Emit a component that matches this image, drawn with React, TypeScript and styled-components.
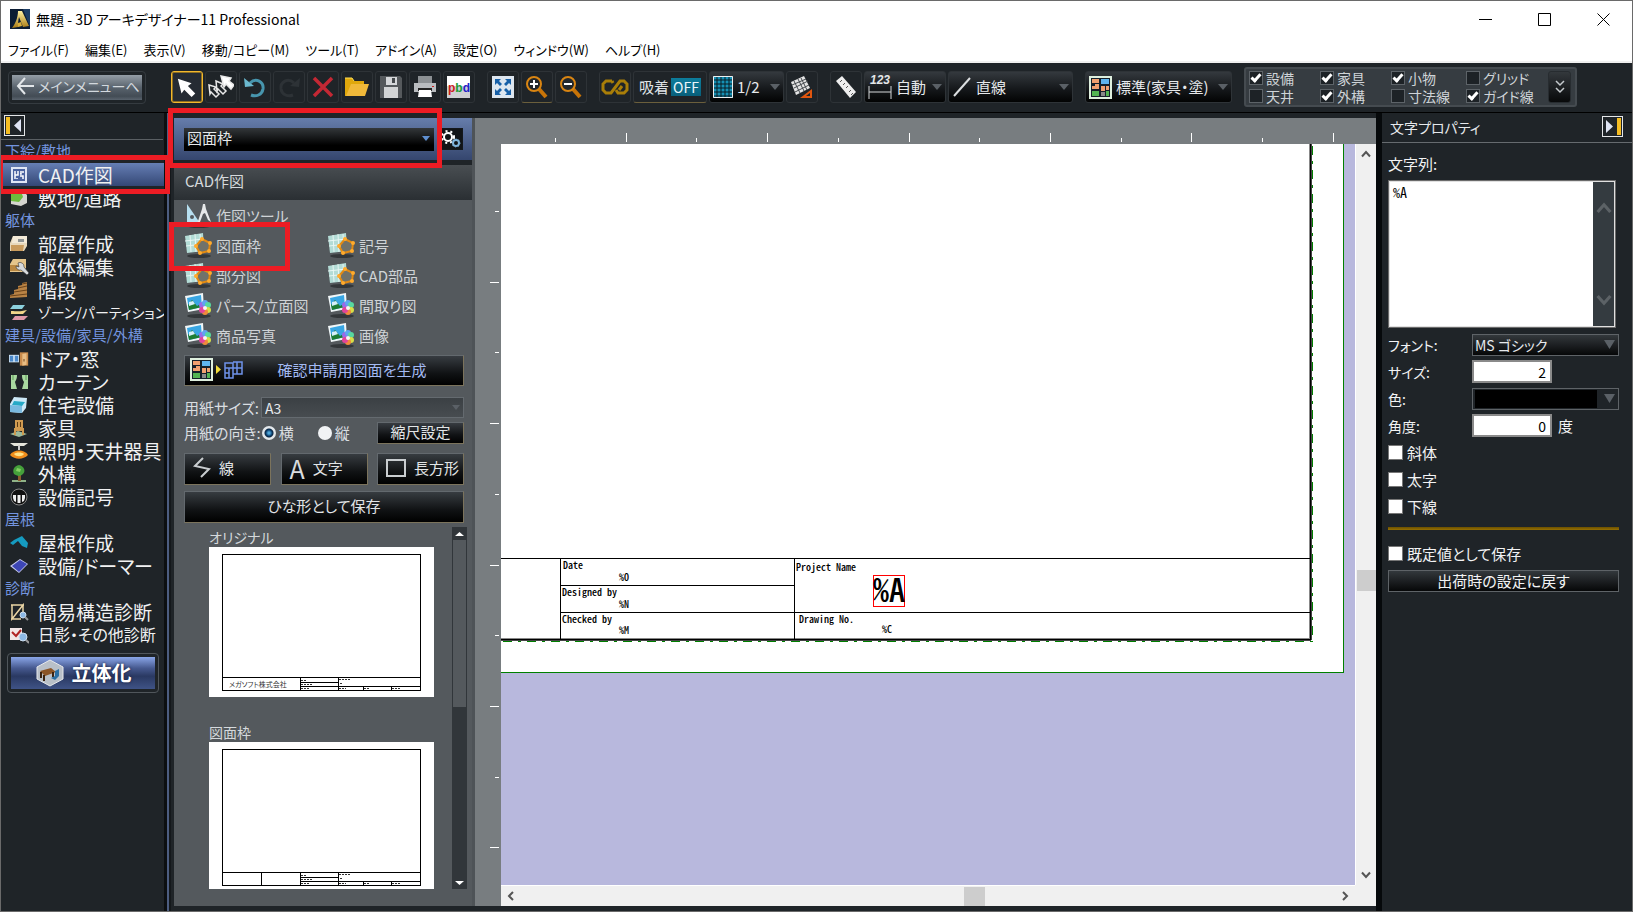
import React from "react";
import styled, { createGlobalStyle, css } from "styled-components";

const GlobalStyle = createGlobalStyle`
  *, *::before, *::after { box-sizing: border-box; }
  html, body { margin: 0; padding: 0; }
  body, button, input, select, textarea {
    font-family: "Noto Sans CJK JP", "Noto Sans", sans-serif;
    font-feature-settings: "palt";
    font-size: 15px;
    line-height: 20px;
  }
  button, input, select, textarea { margin: 0; padding: 0; border-radius: 0; outline: none; }
  button { cursor: default; white-space: nowrap; }
  svg { display: block; flex: none; }
`;

/* ---------- window frame ---------- */

const Window = styled.div`
  position: relative;
  display: flex;
  flex-direction: column;
  height: 100vh;
  overflow: hidden;
  border: 1px solid #6a6a6a;
  background: #1f2428;
  color: #e6e9ec;
  white-space: nowrap;
`;

const TitleBar = styled.header`
  display: flex;
  align-items: center;
  flex: none;
  height: 36px;
  padding: 0 2px 0 9px;
  gap: 6px;
  background: #fff;
  color: #000;
`;

const Title = styled.h1`
  flex: 1;
  margin: 0;
  font-size: 14px;
  line-height: 20px;
  font-weight: 400;
`;

const CaptionButton = styled.button`
  display: flex;
  align-items: center;
  justify-content: center;
  width: 53px;
  height: 34px;
  border: 0;
  background: transparent;
`;

const MenuBar = styled.nav`
  display: flex;
  flex: none;
  height: 26px;
  padding: 1px 0 0 7px;
  gap: 16px;
  background: #fff;
  border-bottom: 2px solid #f0f0f0;
`;

const MenuItem = styled.button`
  border: 0;
  background: transparent;
  color: #000;
  font-size: 13px;
`;

/* ---------- toolbar ---------- */

const Toolbar = styled.div`
  display: flex;
  align-items: center;
  flex: none;
  height: 50px;
  padding: 0 0 1px 7px;
  gap: 12px;
  border-bottom: 1px solid #000;
`;

const ToolGroup = styled.div`
  display: flex;
  gap: 2px;
`;

const MainMenuFrame = styled.div`
  flex: none;
  width: 138px;
  height: 33px;
  margin-right: 13px;
  padding: 3px;
  border: 1px solid #353b40;
  border-radius: 4px;
`;

const MainMenuButton = styled.button`
  display: flex;
  align-items: center;
  gap: 4px;
  width: 100%;
  height: 25px;
  padding: 0 0 2px 4px;
  border: 0;
  background: linear-gradient(#949da6, #59636d 50%, #434c55 85%, #59636d);
  color: #d3d9de;
  font-size: 14px;
`;

const ToolButton = styled.button<{ $active?: boolean; $underlined?: boolean; $width?: number }>`
  display: flex;
  flex: none;
  align-items: center;
  justify-content: center;
  gap: 2px;
  width: ${(p) => p.$width ?? 32}px;
  height: 32px;
  border: 1px solid #2e3337;
  border-radius: 3px;
  background: #1f2428;
  color: #dfe3e6;
  ${(p) => p.$underlined && css`border-bottom-color: #6b5f3c;`}
  ${(p) => p.$active && css`border: 1px solid #f2b82c; box-shadow: inset 0 0 0 1px #8f6f22; background: #252b33;`}
`;

const SnapState = styled.span`
  width: 30px;
  height: 18px;
  background: linear-gradient(#0d7d9c, #085f7a);
  color: #e9f6fa;
  font-size: 14px;
  line-height: 18px;
`;

const ToolSelect = styled.label<{ $width: number }>`
  display: flex;
  flex: none;
  align-items: center;
  gap: 4px;
  width: ${(p) => p.$width}px;
  height: 32px;
  padding: 0 3px;
  border: 1px solid #2e3337;
  border-radius: 3px;
  background: linear-gradient(#34393e, #16191c 55%, #020303);
`;

const PlainSelect = styled.select`
  flex: 1;
  min-width: 0;
  height: 20px;
  border: 0;
  appearance: none;
  background: transparent;
  color: #e6e9ec;
`;

const LayerPanel = styled.div`
  display: flex;
  flex: none;
  align-items: center;
  width: 333px;
  height: 40px;
  padding: 0 4px 0 3px;
  border: 2px solid #454b50;
  border-radius: 3px;
  background: #363c41;
`;

const LayerGrid = styled.div`
  display: grid;
  flex: 1;
  grid-template-columns: 71px 71px 75px 1fr;
  grid-auto-rows: 18px;
  align-items: center;
`;

const LayerLabel = styled.label`
  display: flex;
  align-items: center;
  gap: 3px;
  color: #cfd4d8;
  font-size: 14px;
  line-height: 18px;
`;

const DarkCheck = styled.input.attrs({ type: "checkbox" })`
  appearance: none;
  display: grid;
  place-items: center;
  flex: none;
  width: 14px;
  height: 14px;
  border: 1px solid #5d6368;
  background: #1d2226;
  &:checked::after {
    content: "";
    width: 6px;
    height: 10px;
    margin-bottom: 3px;
    border: solid #fff;
    border-width: 0 3px 3px 0;
    transform: rotate(42deg);
  }
`;

const ExpandButton = styled.button`
  display: grid;
  place-items: center;
  width: 23px;
  height: 32px;
  border: 1px solid #272c30;
  border-radius: 3px;
  background: linear-gradient(#33383c, #08090a);
`;

/* ---------- body ---------- */

const Body = styled.main`
  display: flex;
  flex: 1;
  min-height: 0;
`;

const Sidebar = styled.nav`
  flex: none;
  width: 163px;
`;

const ToggleRow = styled.div`
  display: flex;
  align-items: center;
  height: 27px;
  padding: 0 0 1px 3px;
  margin-right: 1px;
  border-bottom: 1px solid #5a5f63;
`;

const ToggleButton = styled.button`
  display: grid;
  place-items: center;
  width: 21px;
  height: 21px;
  border: 1px solid #e4e6e8;
  background: #1f2428;
`;

const SideGroup = styled.h2`
  height: 23px;
  margin: 0;
  padding-left: 4px;
  color: #7394df;
  font-size: 15px;
  font-weight: 400;
  line-height: 22px;
`;

/* Long names step down in size so that they stay inside the column. */
const nameSize = (length: number) => (length > 9 ? 14 : length > 7 ? 16 : 19);

const SideItem = styled.button<{ $active?: boolean; $length: number }>`
  display: flex;
  align-items: center;
  gap: 9px;
  width: 100%;
  height: 23px;
  padding-left: 8px;
  border: 0;
  background: ${(p) => (p.$active ? "linear-gradient(#667fb5, #344775)" : "transparent")};
  color: #f0f1f2;
  font-size: ${(p) => nameSize(p.$length)}px;
  line-height: 23px;
`;

const SolidFrame = styled.div`
  width: 152px;
  height: 40px;
  margin: 7px 0 0 6px;
  padding: 3px;
  border: 1px solid #50565b;
  border-radius: 4px;
`;

const SolidButton = styled.button`
  display: flex;
  align-items: center;
  justify-content: center;
  gap: 7px;
  width: 100%;
  height: 32px;
  border: 0;
  background: linear-gradient(#8aa6e8, #46598f 35%, #2a3962 60%, #3f5386);
  color: #fff;
  font-size: 20px;
  font-weight: 700;
  text-shadow: 0 0 3px #101a38;
`;

const Divider = styled.div`
  flex: none;
  width: 10px;
  background: linear-gradient(90deg, #0c0f11 0 3px, #4c5d80 3px 5px, #14181b 5px 7px, #1f2428 7px);
`;

/* ---------- tool panel ---------- */

const Panel = styled.section`
  display: flex;
  flex: none;
  flex-direction: column;
  width: 301px;
  margin: 5px 0;
  border-right: 3px solid #4e5357;
  background: #54595d;
`;

const PanelTop = styled.div`
  display: flex;
  align-items: center;
  justify-content: space-between;
  flex: none;
  height: 42px;
  padding: 0 9px 0 10px;
  background: linear-gradient(#667dab, #35466e);
`;

const FrameSelect = styled.label`
  display: flex;
  align-items: center;
  width: 250px;
  height: 23px;
  padding: 0 4px 2px 3px;
  background: linear-gradient(#33373a, #000 75%);
`;

const GearButton = styled.button`
  display: grid;
  place-items: center;
  width: 24px;
  height: 22px;
  border: 1px solid #14181c;
  background: #111417;
`;

const PanelTitle = styled.h2`
  flex: none;
  height: 40px;
  margin: 0;
  padding-left: 11px;
  border-top: 5px solid #1f2428;
  background: linear-gradient(#494e52, #2a2f33);
  color: #d5d9dc;
  font-size: 15px;
  font-weight: 400;
  line-height: 32px;
`;

const ToolGrid = styled.div`
  display: grid;
  flex: none;
  grid-template-columns: 143px 1fr;
  grid-auto-rows: 30px;
  padding: 1px 0 4px 11px;
`;

const GridItem = styled.button<{ $wide?: boolean }>`
  display: flex;
  align-items: center;
  gap: 4px;
  border: 0;
  background: transparent;
  color: #cfd3d6;
  ${(p) => p.$wide && css`grid-column: 1 / -1;`}
`;

const PanelForm = styled.div`
  display: flex;
  flex: none;
  flex-direction: column;
  padding: 0 8px 0 10px;
`;

const FormLine = styled.div<{ $top: number }>`
  display: flex;
  align-items: center;
  justify-content: space-between;
  margin-top: ${(p) => p.$top}px;
  color: #dadee1;
`;

const DarkButton = styled.button<{ $width?: number; $height: number; $blue?: boolean; $start?: boolean }>`
  display: flex;
  align-items: center;
  justify-content: ${(p) => (p.$start ? "flex-start" : "center")};
  gap: 8px;
  width: ${(p) => (p.$width ? `${p.$width}px` : "100%")};
  height: ${(p) => p.$height}px;
  padding: ${(p) => (p.$start ? "0 0 2px 8px" : "0 0 2px")};
  border: 1px solid #63696e;
  border-right-color: #7b735c;
  border-bottom-color: #7b735c;
  background: linear-gradient(#373c41, #101214 60%, #000);
  color: ${(p) => (p.$blue ? "#a3baf3" : "#e2e5e7")};
`;

const ButtonCaption = styled.span`
  flex: 1;
  padding-right: 10px;
  text-align: center;
`;

const IconPair = styled.span`
  display: flex;
  align-items: center;
  gap: 3px;
  padding-left: 5px;
`;

const LetterIcon = styled.span`
  color: #d9dcde;
  font-size: 25px;
  line-height: 28px;
`;

const PaperSelect = styled.div`
  display: flex;
  align-items: center;
  width: 203px;
  height: 21px;
  padding: 0 3px;
  border: 1px solid #646a6f;
  background: linear-gradient(#3b4044, #474c50);
`;

const SmallSelect = styled(PlainSelect)`
  font-size: 14px;
`;

const RadioSet = styled.div`
  display: flex;
  flex: 1;
  gap: 24px;
  padding-left: 1px;
`;

const RadioLabel = styled.label`
  display: flex;
  align-items: center;
  gap: 3px;
`;

const Radio = styled.input.attrs({ type: "radio" })`
  appearance: none;
  width: 14px;
  height: 14px;
  border-radius: 50%;
  background: #f1f3f5;
  &:checked {
    background: radial-gradient(circle at 50% 50%, #4fa6d8 0 1px, #0d4272 3px, #0a2540 4px, #e3e8ec 5px);
  }
`;

const TemplateArea = styled.div`
  display: flex;
  flex: 1;
  min-height: 0;
  justify-content: space-between;
  margin: 4px 5px 17px 35px;
`;

const TemplateList = styled.div`
  overflow: hidden;
`;

const Template = styled.button`
  display: flex;
  flex-direction: column;
  justify-content: flex-start;
  align-items: flex-start;
  height: 195px;
  border: 0;
  background: transparent;
  color: #d5d9dc;
  font-size: 14px;
  svg { background: #fff; }
  span { height: 20px; }
`;

const DarkScroll = styled.div`
  display: flex;
  flex-direction: column;
  width: 15px;
  padding: 0 1px;
  background: #31363a;
`;

const DarkScrollButton = styled.button`
  display: grid;
  place-items: center;
  width: 13px;
  height: 13px;
  border: 0;
  background: transparent;
`;

const DarkScrollThumb = styled.div`
  height: 167px;
  margin-bottom: auto;
  background: #54595d;
`;

/* ---------- drawing area ---------- */

const Workspace = styled.section`
  display: grid;
  flex: 1;
  min-width: 0;
  grid-template: 26px minmax(0, 1fr) 21px / 26px minmax(0, 1fr) 21px;
  margin: 5px 0;
  background: #787d80;
`;

const RulerTop = styled.div`
  grid-column: 2 / 4;
  overflow: hidden;
`;

const RulerLeft = styled.div`
  grid-column: 1;
  overflow: hidden;
`;

const Canvas = styled.div`
  overflow: hidden;
  background: #b8b8dd;
`;

const ScrollBar = styled.div<{ $horizontal?: boolean }>`
  display: flex;
  flex-direction: ${(p) => (p.$horizontal ? "row" : "column")};
  align-items: center;
  background: #f0f0f0;
  ${(p) =>
    p.$horizontal
      ? css`grid-column: 2; border-top: 1px solid #fff;`
      : css`border-left: 1px solid #fff;`}
`;

const ScrollButton = styled.button`
  display: grid;
  place-items: center;
  width: 20px;
  height: 20px;
  border: 0;
  background: transparent;
`;

const ScrollTrack = styled.div<{ $grow: number }>`
  flex: ${(p) => p.$grow} 0 0;
`;

const ScrollThumb = styled.div<{ $horizontal?: boolean }>`
  width: ${(p) => (p.$horizontal ? 21 : 19)}px;
  height: ${(p) => (p.$horizontal ? 19 : 21)}px;
  background: #cdcdcd;
`;

const ScrollCorner = styled.div`
  background: #f0f0f0;
`;

/* ---------- property panel ---------- */

const Properties = styled.aside`
  flex: none;
  width: 256px;
  border-left: 6px solid #06090b;
`;

const PropertiesHeader = styled.div`
  display: flex;
  align-items: center;
  justify-content: space-between;
  height: 30px;
  padding: 0 9px 2px 8px;
  border-bottom: 1px solid #666b6f;
`;

const PropertiesTitle = styled.h2`
  margin: 0;
  font-size: 14px;
  font-weight: 400;
`;

const PropertiesForm = styled.form`
  padding: 11px 13px 0 6px;
  color: #f2f3f4;
`;

const TextLabel = styled.label`
  display: block;
  height: 26px;
`;

const TextFrame = styled.div`
  display: flex;
  width: 228px;
  height: 148px;
  margin-bottom: 3px;
  border: 1px solid #6b6b6b;
  outline: 1px solid #e0e0e0;
  outline-offset: -2px;
  padding: 1px;
`;

const TextArea = styled.textarea`
  flex: 1;
  min-width: 0;
  padding: 0 3px;
  border: 0;
  resize: none;
  background: #fff;
  color: #000;
  font-size: 14px;
  font-feature-settings: "hwid";
`;

const TextScroll = styled.div`
  display: flex;
  flex-direction: column;
  justify-content: space-between;
  align-items: center;
  width: 21px;
  padding: 18px 0;
  background: #343b40;
`;

const PropRow = styled.div`
  display: flex;
  align-items: center;
  height: 27px;
`;

const PropLabel = styled.label`
  width: 84px;
  font-size: 14px;
`;

const PropSelect = styled.div`
  display: flex;
  align-items: center;
  flex: 1;
  height: 22px;
  padding: 0 3px 0 2px;
  border: 1px solid #5e6367;
  background: linear-gradient(#33383c, #060708);
`;

const ColorSelect = styled(PropSelect)`
  background: #1f2428;
`;

const ColorValue = styled.select`
  flex: 1;
  height: 18px;
  margin-right: 7px;
  border: 0;
  appearance: none;
  background: #000;
  color: #000;
`;

const NumberInput = styled.input.attrs({ type: "text" })`
  width: 80px;
  height: 23px;
  margin-right: 6px;
  padding-right: 4px;
  border: 2px solid #8a8a8a;
  background: #fff;
  color: #000;
  font-size: 14px;
  text-align: right;
`;

const CheckRow = styled.label`
  display: flex;
  align-items: center;
  gap: 4px;
  height: 27px;
`;

const WhiteCheck = styled.input.attrs({ type: "checkbox" })`
  appearance: none;
  width: 15px;
  height: 15px;
  border: 1px solid #777;
  background: #fff;
`;

const GoldRule = styled.hr`
  height: 3px;
  margin: 7px 0 10px;
  border: 0;
  background: linear-gradient(#6b5000, #967003);
`;

const ResetButton = styled.button`
  width: 100%;
  height: 22px;
  margin-top: 3px;
  border: 1px solid #5e6367;
  background: linear-gradient(#33383c, #060708);
  color: #f2f3f4;
  line-height: 18px;
`;

/* Red frames that mark the steps of the walkthrough, over the window. */
const Callout = styled.div<{ $left: number; $top: number; $width: number; $height: number }>`
  position: absolute;
  left: ${(p) => p.$left}px;
  top: ${(p) => p.$top}px;
  width: ${(p) => p.$width}px;
  height: ${(p) => p.$height}px;
  border: 5px solid #ed1c24;
  pointer-events: none;
`;

/* ---------- icons ---------- */

const Down = ({ color = "#5a6066", w = 10, h = 6 }: { color?: string; w?: number; h?: number }) => (
  <svg width={w} height={h} viewBox="0 0 10 6" preserveAspectRatio="none"><path d="M0 0h10L5 6z" fill={color} /></svg>
);

const Chevron = ({ dir, color = "#555", size = 10, stroke = 2 }: { dir: "up" | "down" | "left" | "right"; color?: string; size?: number; stroke?: number }) => {
  const paths = { up: "M1 7.500L5 3l4 4.500", down: "M1 2.500L5 7l4-4.500", left: "M7 1L3 5l4 4", right: "M3 1l4 4-4 4" };
  return <svg width={size} height={size} viewBox="0 0 10 10"><path d={paths[dir]} fill="none" stroke={color} strokeWidth={stroke} /></svg>;
};

const AppIcon = () => (
  <svg width="20" height="20" viewBox="0 0 20 20">
    <defs><linearGradient id="gold" x1="0" y1="0" x2="0" y2="1"><stop offset="0" stopColor="#fff0a0" /><stop offset="1" stopColor="#a87b14" /></linearGradient></defs>
    <rect width="20" height="20" fill="#0b1c33" />
    <path d="M13 0h7v18z" fill="#1d3e66" />
    <path d="M8 2h4l7 15-6 1L9 8c-1 4-1 7-1 10l-6 1c3-4 6-10 6-17z" fill="url(#gold)" />
    <path d="M8 14l3-1 1 4-4 1z" fill="#d8ad3a" />
  </svg>
);

const PanelToggle = ({ flip }: { flip?: boolean }) => (
  <svg width="17" height="17" viewBox="0 0 17 17">
    {flip ? (
      <><rect x="13" width="4" height="17" fill="#f5bd22" /><path d="M2 2v13l7-6.500z" fill="#dfe4f4" /></>
    ) : (
      <><rect width="4" height="17" fill="#f5bd22" /><path d="M15 2v13L8 8.500z" fill="#dfe4f4" /></>
    )}
  </svg>
);

const magnifier = (sign: React.ReactNode) => (
  <svg width="24" height="24" viewBox="0 0 24 24" fill="none">
    <path d="M14 14l7 8" stroke="#c87408" strokeWidth="4" />
    <circle cx="9" cy="9" r="7" fill="#23282c" stroke="#d98512" strokeWidth="2" />
    {sign}
  </svg>
);

const toolIcons: Record<string, React.ReactNode> = {
  arrow: (
    <svg width="22" height="22" viewBox="0 0 24 24"><path d="M2 3l15 5-4 3 8 8-4 4-8-8-3 4z" fill="#fff" /></svg>
  ),
  multi: (
    <svg width="26" height="26" viewBox="0 0 26 26" stroke="#e8e8e8" strokeWidth="1.500">
      <path d="M1 11l7 2-2 2 5 5-3 3-5-5-1 2z" fill="#1f2428" /><path d="M8 7l7 3-2 2 5 5-3 3-5-5-1 2z" fill="#1f2428" />
      <path d="M13 2l10 2-2 3 5 4-3 4-5-5-2 3z" fill="#fff" />
    </svg>
  ),
  undo: (
    <svg width="24" height="24" viewBox="0 0 24 24" fill="none"><path d="M7 8c6-6 14-1 13 6-1 6-7 8-12 6" stroke="#4795ad" strokeWidth="3" /><path d="M1 3l1 9 9-1z" fill="#6bb9cf" /></svg>
  ),
  redo: (
    <svg width="24" height="24" viewBox="0 0 24 24" fill="none"><path d="M17 8C11 2 3 7 4 14c1 6 7 8 12 6" stroke="#2d3236" strokeWidth="3" /><path d="M23 3l-1 9-9-1z" fill="#2d3236" /></svg>
  ),
  remove: (
    <svg width="22" height="22" viewBox="0 0 22 22"><path d="M2 2l18 18M20 2L2 20" stroke="#c42834" strokeWidth="3.500" /></svg>
  ),
  open: (
    <svg width="26" height="22" viewBox="0 0 26 22"><path d="M1 2h7l2 3h10v4H8L3 20H1z" fill="#e0a80c" /><path d="M7 8h18l-4 12H2z" fill="#f0b93a" /><path d="M1 2h7l2 3" stroke="#ffdf55" fill="none" /></svg>
  ),
  save: (
    <svg width="22" height="22" viewBox="0 0 22 22"><path d="M0 0h20l2 2v20H0z" fill="#55595c" /><path d="M6 1h11v8H6z" fill="#d5d7d9" /><path d="M12 2h3v5h-3z" fill="#44484b" /><path d="M4 11h14v11H4z" fill="#d2d4d5" /></svg>
  ),
  print: (
    <svg width="24" height="22" viewBox="0 0 24 22"><path d="M5 0h14v7H5z" fill="#8c9093" /><path d="M1 7h22v9H1z" fill="#b9bcbf" /><path d="M5 12h14v3H5z" fill="#222" /><path d="M6 14h12l1 7H5z" fill="#fff" /><path d="M19 10h2v1h-2z" fill="#c22" /></svg>
  ),
  pbd: (
    <svg width="26" height="22" viewBox="0 0 26 22"><path d="M1 0h23v22H1z" fill="#cfd0d3" /><path d="M1 0h23v10H1z" fill="#fff" /><text x="2" y="16" fontSize="12" fontWeight="700" fontFamily="Liberation Sans"><tspan fill="#d01c1c">p</tspan><tspan fill="#1c9a35">b</tspan><tspan fill="#2320c8">d</tspan></text></svg>
  ),
  fit: (
    <svg width="24" height="24" viewBox="0 0 24 24"><path d="M1 1h22v22H1z" fill="#dde6ef" /><path d="M4 4h6L8 6l3 3-2 2-3-3-2 2zM20 4v6l-2-2-3 3-2-2 3-3-2-2zM4 20v-6l2 2 3-3 2 2-3 3 2 2zM20 20h-6l2-2-3-3 2-2 3 3 2-2z" fill="#1760a8" /></svg>
  ),
  zoomIn: magnifier(<path d="M5 9h8M9 5v8" stroke="#fff" strokeWidth="2" />),
  zoomOut: magnifier(<path d="M5 9h8" stroke="#fff" strokeWidth="2" />),
  loop: (
    <svg width="28" height="18" viewBox="0 0 28 18" fill="none"><path d="M11 3H5L2 6v6l3 3h5l9-12h4l3 3v6l-3 3h-6l-2-3M11 3l1 2M21 8l-3 4" stroke="#a97e08" strokeWidth="3" /></svg>
  ),
  grid: (
    <svg width="20" height="24" viewBox="0 0 20 24"><path d="M0 1h20v22H0z" fill="#1590b4" /><path d="M4 1v22M8 1v22M12 1v22M16 1v22M0 5h20M0 9h20M0 13h20M0 17h20M0 21h20" stroke="#0a1c24" /><path d="M.5 1.500h19v21H.5z" fill="none" stroke="#eee" /></svg>
  ),
  gridSkew: (
    <svg width="24" height="24" viewBox="0 0 24 24"><path d="M1 7L14 1l6 12-14 7z" fill="#e4e4e4" /><path d="M4 6l6 12M8 4l6 12M11 3l6 12M2 10l14-6M4 13l14-7M5 17l14-7" stroke="#43484c" /><path d="M13 22l8-6v6z" fill="#1f2428" stroke="#e0560f" strokeWidth="2" /></svg>
  ),
  ruler: (
    <svg width="24" height="26" viewBox="0 0 24 26"><path d="M2 7l6-5 14 16-6 6z" fill="#eee" /><path d="M8 6l-2 2M11 9l-2 2M14 12l-2 2M17 16l-2 2M19 19l-2 2" stroke="#555" /></svg>
  ),
  dimension: (
    <svg width="24" height="26" viewBox="0 0 24 26"><text x="2" y="10" fontSize="12" fontStyle="italic" fontWeight="700" fontFamily="Liberation Sans" fill="#e3e6e8">123</text><path d="M1 12v13M23 12v13M1 18h22" stroke="#d5d8da" fill="none" /></svg>
  ),
  line: (
    <svg width="20" height="22" viewBox="0 0 20 22"><path d="M2 20L18 2" stroke="#dcdfe1" strokeWidth="2" /></svg>
  ),
  plan: (
    <svg width="23" height="23" viewBox="0 0 23 23"><path d="M1 1h21v21H1z" fill="#15202a" stroke="#dff0df" strokeWidth="2" /><path d="M3 3h7v4H3zM6 8h4v5H3v-3h3z" fill="#f0a070" /><path d="M12 3h8v5h-8z" fill="#5fb4ef" /><path d="M12 10h4v5h-4zM17 10h3v4h-3z" fill="#f0a070" /><path d="M3 15h7v5H3z" fill="#52b552" /><path d="M12 16h4v4h-4z" fill="#888" /><path d="M17 15h3v5h-3z" fill="#52b552" /></svg>
  ),
};

const sideIcon = (children: React.ReactNode) => <svg width="20" height="18" viewBox="0 0 20 18">{children}</svg>;

const sideIcons: Record<string, React.ReactNode> = {
  cad: sideIcon(<><path d="M2 1h16v16H2z" fill="#dfe6f5" /><path d="M4 3h12v12H4z" fill="#4b63a0" /><path d="M6 5v8M6 9h3V5M12 5v3h-1M11 10h3v3M14 5v2M8 12v1" stroke="#fff" fill="none" strokeWidth="1.500" /></>),
  site: sideIcon(<><path d="M2 4l12-2 4 4v8l-6 3-10-2z" fill="#d5d5d0" /><path d="M2 3l10-1 2 6-4 5-8-1z" fill="#6dbb3d" /></>),
  room: sideIcon(<><path d="M4 1h14v10l-3 5H1V8z" fill="#e8d9bd" /><path d="M4 1h14v7H3z" fill="#f3ead8" /><path d="M9 4h6v3H9z" fill="#8f9494" /><path d="M2 10h13l-1 6H2z" fill="#c99b5d" /></>),
  wrench: sideIcon(<><path d="M4 1h13v9l-3 4H1V6z" fill="#e5c58b" /><path d="M1 7h10v6H1z" fill="#b98842" /><path d="M9 5a4 4 0 0 1 6 4l5 6-2 2-6-5a4 4 0 0 1-5-4l3 1z" fill="#d6dadd" stroke="#333" strokeWidth=".6" /></>),
  stairs: sideIcon(<><path d="M18 1v15L1 17v-3l4-1V9l4-1V5l4-1V2z" fill="#b98345" /><path d="M13 3l5-1M9 7l9-2M5 11l13-2M1 15l17-2" stroke="#6b431a" /></>),
  zone: sideIcon(<><path d="M4 1h12l-3 4H1z" fill="#8bd0dd" /><path d="M2 7c6 0 8 1 16-1l-4 4H2z" fill="#f1d68a" /><path d="M6 12h13l-4 4H3z" fill="#df98a8" /></>),
  door: <svg width="20" height="18" viewBox="0 0 24 18"><path d="M0 4h12v9H0z" fill="#cfe3f5" /><path d="M1 5h4v7H1zM7 5h4v7H7z" fill="#4b89ca" /><path d="M13 1h10v16H13z" fill="#c98b4c" /><path d="M16 3l5-1v14l-5 1z" fill="#e8bd84" /><path d="M18 9v3" stroke="#5a3411" /></svg>,
  curtain: sideIcon(<><path d="M2 2h6c0 4-1 5-2 7l2 7H2zM19 2h-6c0 4 1 5 2 7l-2 7h6z" fill="#a9d9a0" /><path d="M4 2v5M17 2v5" stroke="#5f9b58" /></>),
  bath: sideIcon(<><path d="M5 1l13 1-1 10-4 5-12-1V8z" fill="#cde9f7" /><path d="M5 5l11 1-3 4-10-1z" fill="#27a9c6" /><path d="M1 9l12 1v7L1 16z" fill="#79b9df" /></>),
  chair: sideIcon(<><path d="M1 15l8-3 9 3-8 3z" fill="#9cb99a" /><path d="M6 1h8v8h1v7h-2v-4H7v4H5V9h1z" fill="#cf9a50" /><path d="M8 3h1v5H8zM11 3h1v5h-1z" fill="#593a15" /></>),
  lamp: sideIcon(<><path d="M1 1h18l-4 3H5z" fill="#e5e5dc" /><path d="M9 3h2v5H9z" fill="#ccc" /><path d="M1 13c3-6 15-6 18 0-5 5-13 5-18 0z" fill="#f08d1b" /><path d="M5 12c2-2 8-2 10 0-2 3-8 3-10 0z" fill="#ffe285" /></>),
  tree: sideIcon(<><path d="M3 15h14v2H3z" fill="#8fb287" /><path d="M9 9h3v7H9z" fill="#8d5d2d" /><path d="M10 0c5 1 7 6 4 9-3 3-6 2-9 0-2-4 0-8 5-9z" fill="#45a03b" /><path d="M8 3l4 1-1 3-4-1z" fill="#85cf63" /></>),
  symbol: sideIcon(<><circle cx="10" cy="9" r="8" fill="#111" stroke="#888" /><path d="M4 7h3v7l-2-1-1-3zM8.500 7h3v8h-3zM13 7h3v3l-1 3-2 1z" fill="#eee" /></>),
  roof: sideIcon(<path d="M1 9l4-3 8-4 6 7-1 5-5-2-4-5-5 4z" fill="#159bc0" />),
  dormer: sideIcon(<><path d="M1 9l10-7 8 5-9 9z" fill="#c9cdf0" /><path d="M3 9l8-6 7 4-8 8z" fill="#3d46b5" /></>),
  structure: sideIcon(<><path d="M2 2h13M2 16h10M3 2v14L14 2v9" stroke="#ecd6a5" strokeWidth="1.500" fill="none" /><circle cx="14" cy="12" r="3" fill="#8cb8e4" stroke="#cde" /><path d="M16 14l3 3" stroke="#999" strokeWidth="2" /></>),
  shadow: sideIcon(<><path d="M1 2h12v12H1z" fill="#f2e7e7" /><path d="M3 6l4 4 5-6" stroke="#b02525" strokeWidth="2" fill="none" /><circle cx="14" cy="11" r="4" fill="#8cb8e4" stroke="#cde" /><path d="M17 14l3 3" stroke="#999" strokeWidth="2" /></>),
};

const IconShadow = () => <ellipse cx="14" cy="23" rx="12" ry="2" fill="#33373a" />;

const FrameIcon = () => (
  <svg width="27" height="26" viewBox="0 0 27 26">
    <IconShadow /><path d="M0 3l18-3 1 18-17 2z" fill="#b3dcd6" /><path d="M5 2l1 17M10 1l1 18M15 1l1 17M0 8l18-2M1 13l18-2" stroke="#e8f6f3" />
    <path d="M11 13l6-7 8 4-1 8-9 2z" fill="#70726a" stroke="#e38a12" strokeWidth="2" />
    {[[11, 13], [17, 6], [25, 10], [24, 18], [15, 20]].map(([x, y]) => <circle key={x} cx={x} cy={y} r="2" fill="#ffab2d" />)}
  </svg>
);

const PictureIcon = () => (
  <svg width="27" height="26" viewBox="0 0 27 26">
    <IconShadow /><path d="M0 3l18-3 1 16-16 3z" fill="#f0f6f8" /><path d="M2 5l14-3 1 12-13 3z" fill="#39a6e3" /><path d="M3 12l4-5 5 6 5-3v4L4 17z" fill="#1d7d33" /><path d="M4 9l4-1 2 3-6 2z" fill="#d4effa" />
    {[["#9b6be8", 17, 12], ["#5fa4f0", 20, 10], ["#57d8a0", 23, 12], ["#d7df48", 23, 17], ["#f08a3c", 20, 19], ["#e2459a", 17, 17]].map(([fill, cx, cy]) => (
      <circle key={fill} cx={cx} cy={cy} r="3" fill={String(fill)} />
    ))}
    <circle cx="20" cy="15" r="2" fill="#f6f6f6" />
  </svg>
);

const DraftIcon = () => (
  <svg width="27" height="26" viewBox="0 0 27 26">
    <IconShadow /><path d="M2 1l13 19H2z" fill="#b7dff0" /><circle cx="7" cy="14" r="2" fill="#54595d" /><path d="M18 1h2l1 5 5 13-3-2-3-7-2 1-3 8-3 2 5-15z" fill="#e6e8e9" />
  </svg>
);

const WallIcon = () => (
  <svg width="19" height="18" viewBox="0 0 19 18" fill="none" stroke="#6f93ea" strokeWidth="1.500"><path d="M1 2h8v15H1zM9 1h9v12H9M1 7h17M9 13v4M13 1v12M5 7v10M1 12h4" /></svg>
);

const Gears = () => (
  <svg width="20" height="18" viewBox="0 0 20 18" fill="none">
    <circle cx="7" cy="7" r="4" stroke="#fff" strokeWidth="2" /><circle cx="7" cy="7" r="6" stroke="#fff" strokeWidth="2" strokeDasharray="2 3" />
    <circle cx="15" cy="13" r="3" stroke="#7fb4dc" strokeWidth="2" /><circle cx="15" cy="13" r="4" stroke="#7fb4dc" strokeWidth="1" strokeDasharray="1 2" />
  </svg>
);

const SheetThumb = ({ company, height }: { company?: string; height: number }) => (
  <svg width="225" height={height} viewBox={`0 0 225 ${height}`} shapeRendering="crispEdges">
    <path d="M13.500 7.500h198v136h-198zM13 130.500h199M91.500 130v14M129.500 130v14M91 135.500h38M91 139.500h121M154.500 139v5M182.500 139v5" fill="none" stroke="#000" />
    {!company && <path d="M52.500 130v14" stroke="#000" />}
    <path d="M92 133h5M92 137h11M92 141.500h9M130 132.500h12M131 136h3M130 141.500h7M155 141.500h5M183 141.500h9" stroke="#333" strokeDasharray="2 1" />
    {company && <text x="20" y="140" fontSize="7" fill="#333">{company}</text>}
  </svg>
);

/* Tick positions repeat every 70.7 px on both rulers, short and long in turn. */
const ticks = (first: number, count: number) =>
  Array.from({ length: count }, (_, i) => ({ at: Math.round(first + i * 70.7) + 0.5, long: i % 2 === 1 }));

const TopTicks = () => (
  <svg width="875" height="26">
    {ticks(54, 12).map((t) => <path key={t.at} d={`M${t.at} ${t.long ? 15 : 20}V24`} stroke="#fff" />)}
  </svg>
);

const LeftTicks = () => (
  <svg width="26" height="760">
    {ticks(67, 10).map((t) => <path key={t.at} d={`M${t.long ? 15 : 20} ${t.at}H24`} stroke="#fff" />)}
  </svg>
);

const notes: [string, number, number][] = [
  ["Date", 62, 425], ["%O", 118, 437], ["Designed by", 61, 452], ["%N", 118, 464],
  ["Checked by", 61, 479], ["%M", 118, 490], ["Project Name", 295, 427], ["Drawing No.", 298, 479], ["%C", 381, 489],
];

const Sheet = () => (
  <svg width="854" height="741" viewBox="0 0 854 741">
    <g fill="none" shapeRendering="crispEdges">
      <path d="M0 0h843v529H0z" fill="#fff" />
      <path d="M842.500 0v528.500H0" stroke="#008000" />
      <path d="M0 494.500h808.500V0" stroke="#888" />
      <path d="M0 495.500h809.500V0" stroke="#000" />
      <path d="M810.500 0v496M0 496.500h810" stroke="#444" />
      <path d="M811.500 2v496" stroke="#008000" strokeDasharray="9 6 3 6" />
      <path d="M2 497.500h810" stroke="#008000" strokeDasharray="9 6 3 6" />
      <path d="M0 414.500h809M60 441.500h233M60 468.500h749M59.500 414v81M293.500 414v81" stroke="#000" />
      <path d="M372.500 431.500h31v31h-31z" stroke="#f00" />
    </g>
    <g fontSize="10" fontWeight="500" fill="#000" style={{ fontFeatureSettings: '"hwid"' }}>
      {notes.map(([text, x, y]) => <text key={text} x={x} y={y}>{text}</text>)}
      <text x="372" y="458" fontSize="32">%A</text>
    </g>
  </svg>
);

/* ---------- data ---------- */

const menus = ["ファイル(F)", "編集(E)", "表示(V)", "移動/コピー(M)", "ツール(T)", "アドイン(A)", "設定(O)", "ウィンドウ(W)", "ヘルプ(H)"];

const fileTools = [
  ["arrow", "選択"], ["multi", "複数選択"], ["undo", "元に戻す"], ["redo", "やり直し"], ["remove", "削除"],
  ["open", "開く"], ["save", "保存"], ["print", "印刷"], ["pbd", "データ出力"],
];

const layers: [string, boolean][] = [
  ["設備", true], ["家具", true], ["小物", true], ["グリッド", false],
  ["天井", false], ["外構", true], ["寸法線", false], ["ガイド線", true],
];

const sections: { name: string; items: [string, string][] }[] = [
  { name: "下絵/敷地", items: [["cad", "CAD作図"], ["site", "敷地/道路"]] },
  { name: "躯体", items: [["room", "部屋作成"], ["wrench", "躯体編集"], ["stairs", "階段"], ["zone", "ゾーン/パーティション"]] },
  {
    name: "建具/設備/家具/外構",
    items: [["door", "ドア・窓"], ["curtain", "カーテン"], ["bath", "住宅設備"], ["chair", "家具"], ["lamp", "照明・天井器具"], ["tree", "外構"], ["symbol", "設備記号"]],
  },
  { name: "屋根", items: [["roof", "屋根作成"], ["dormer", "設備/ドーマー"]] },
  { name: "診断", items: [["structure", "簡易構造診断"], ["shadow", "日影・その他診断"]] },
];

const drawTools: [string, React.ReactNode][] = [
  ["図面枠", <FrameIcon />], ["記号", <FrameIcon />], ["部分図", <FrameIcon />], ["CAD部品", <FrameIcon />],
  ["パース/立面図", <PictureIcon />], ["間取り図", <PictureIcon />], ["商品写真", <PictureIcon />], ["画像", <PictureIcon />],
];

/* ---------- parts ---------- */

const TopToolbar = () => (
  <Toolbar>
    <MainMenuFrame>
      <MainMenuButton>
        <svg width="18" height="18" viewBox="0 0 18 18"><path d="M9 1L2 9l7 8M2 9h16" fill="none" stroke="#e3e7ea" strokeWidth="2" /></svg>
        メインメニューへ
      </MainMenuButton>
    </MainMenuFrame>
    <ToolGroup>
      {fileTools.map(([icon, label], i) => <ToolButton key={icon} aria-label={label} $active={i === 0}>{toolIcons[icon]}</ToolButton>)}
    </ToolGroup>
    <ToolGroup>
      <ToolButton aria-label="全体表示">{toolIcons.fit}</ToolButton>
      <ToolButton aria-label="拡大" $underlined>{toolIcons.zoomIn}</ToolButton>
      <ToolButton aria-label="縮小">{toolIcons.zoomOut}</ToolButton>
    </ToolGroup>
    <ToolGroup>
      <ToolButton aria-label="連続">{toolIcons.loop}</ToolButton>
      <ToolButton $width={74} $underlined>吸着<SnapState>OFF</SnapState></ToolButton>
      <ToolSelect $width={75}>
        {toolIcons.grid}
        <PlainSelect aria-label="グリッド間隔"><option>1/2</option></PlainSelect>
        <Down />
      </ToolSelect>
      <ToolButton aria-label="グリッド角度">{toolIcons.gridSkew}</ToolButton>
    </ToolGroup>
    <ToolGroup>
      <ToolButton aria-label="メジャー">{toolIcons.ruler}</ToolButton>
      <ToolSelect $width={82}>
        {toolIcons.dimension}
        <PlainSelect aria-label="寸法"><option>自動</option></PlainSelect>
        <Down />
      </ToolSelect>
      <ToolSelect $width={125}>
        {toolIcons.line}
        <PlainSelect aria-label="線種"><option>直線</option></PlainSelect>
        <Down />
      </ToolSelect>
    </ToolGroup>
    <ToolSelect $width={147}>
      {toolIcons.plan}
      <PlainSelect aria-label="表示スタイル"><option>標準(家具・塗)</option></PlainSelect>
      <Down />
    </ToolSelect>
    <LayerPanel>
      <LayerGrid>
        {layers.map(([name, on]) => <LayerLabel key={name}><DarkCheck defaultChecked={on} />{name}</LayerLabel>)}
      </LayerGrid>
      <ExpandButton aria-label="その他の表示">
        <svg width="10" height="14" viewBox="0 0 10 14"><path d="M1 1l4 4 4-4M1 8l4 4 4-4" fill="none" stroke="#c5cacd" strokeWidth="1.500" /></svg>
      </ExpandButton>
    </LayerPanel>
  </Toolbar>
);

const LeftSidebar = () => (
  <Sidebar>
    <ToggleRow><ToggleButton aria-label="パネルを閉じる"><PanelToggle /></ToggleButton></ToggleRow>
    {sections.map((section) => (
      <React.Fragment key={section.name}>
        <SideGroup>{section.name}</SideGroup>
        {section.items.map(([icon, label]) => (
          <SideItem key={label} $active={icon === "cad"} $length={label.length}>{sideIcons[icon]}{label}</SideItem>
        ))}
      </React.Fragment>
    ))}
    <SolidFrame>
      <SolidButton>
        <svg width="30" height="28" viewBox="0 0 30 28"><path d="M15 1l13 7v12l-13 7L2 20V8z" fill="#b9c0c8" stroke="#e8eaed" /><path d="M5 12l11-3 5 4-11 4z" fill="#8b5527" /><path d="M9 16v6M18 13v5M6 13v6" stroke="#3b2310" strokeWidth="2" /><path d="M20 12l4-2v7l-4 4-4-2 4-2z" fill="#2b6fa3" /></svg>
        立体化
      </SolidButton>
    </SolidFrame>
  </Sidebar>
);

const ToolPanel = () => (
  <Panel>
    <PanelTop>
      <FrameSelect>
        <PlainSelect aria-label="作図の種類"><option>図面枠</option></PlainSelect>
        <Down color="#5f8fd0" w={8} h={5} />
      </FrameSelect>
      <GearButton aria-label="設定"><Gears /></GearButton>
    </PanelTop>
    <PanelTitle>CAD作図</PanelTitle>
    <ToolGrid>
      <GridItem $wide><DraftIcon />作図ツール</GridItem>
      {drawTools.map(([label, icon]) => <GridItem key={label}>{icon}{label}</GridItem>)}
    </ToolGrid>
    <PanelForm>
      <DarkButton $height={31} $blue>
        <IconPair>
          {toolIcons.plan}
          <svg width="5" height="9" viewBox="0 0 5 9"><path d="M0 0l5 4.500L0 9z" fill="#f2dc3a" /></svg>
          <WallIcon />
        </IconPair>
        <ButtonCaption>確認申請用図面を生成</ButtonCaption>
      </DarkButton>
      <FormLine $top={11}>
        <label htmlFor="paper">用紙サイズ:</label>
        <PaperSelect><SmallSelect id="paper"><option>A3</option></SmallSelect><Down w={8} h={5} /></PaperSelect>
      </FormLine>
      <FormLine $top={4}>
        用紙の向き:
        <RadioSet>
          <RadioLabel><Radio name="direction" defaultChecked />横</RadioLabel>
          <RadioLabel><Radio name="direction" />縦</RadioLabel>
        </RadioSet>
        <DarkButton $width={87} $height={22}>縮尺設定</DarkButton>
      </FormLine>
      <FormLine $top={9}>
        <DarkButton $width={87} $height={32} $start>
          <svg width="18" height="22" viewBox="0 0 18 22"><path d="M10 1L2 9l14 3-8 8" fill="none" stroke="#c9cdd0" strokeWidth="2" /></svg>
          線
        </DarkButton>
        <DarkButton $width={87} $height={32} $start><LetterIcon>A</LetterIcon>文字</DarkButton>
        <DarkButton $width={87} $height={32} $start>
          <svg width="20" height="18" viewBox="0 0 20 18"><path d="M1 1h18v16H1z" fill="none" stroke="#c9cdd0" strokeWidth="2" /></svg>
          長方形
        </DarkButton>
      </FormLine>
      <FormLine $top={6}><DarkButton $height={32}>ひな形として保存</DarkButton></FormLine>
    </PanelForm>
    <TemplateArea>
      <TemplateList>
        <Template><span>オリジナル</span><SheetThumb company="メガソフト株式会社" height={150} /></Template>
        <Template><span>図面枠</span><SheetThumb height={147} /></Template>
      </TemplateList>
      <DarkScroll>
        <DarkScrollButton aria-label="上へ"><svg width="9" height="4" viewBox="0 0 9 4"><path d="M0 4l4.500-4L9 4z" fill="#fff" /></svg></DarkScrollButton>
        <DarkScrollThumb />
        <DarkScrollButton aria-label="下へ"><Down color="#fff" w={9} h={4} /></DarkScrollButton>
      </DarkScroll>
    </TemplateArea>
  </Panel>
);

const DrawingArea = () => (
  <Workspace>
    <div />
    <RulerTop><TopTicks /></RulerTop>
    <RulerLeft><LeftTicks /></RulerLeft>
    <Canvas><Sheet /></Canvas>
    <ScrollBar>
      <ScrollButton aria-label="上へ"><Chevron dir="up" /></ScrollButton>
      <ScrollTrack $grow={406} />
      <ScrollThumb />
      <ScrollTrack $grow={274} />
      <ScrollButton aria-label="下へ"><Chevron dir="down" /></ScrollButton>
    </ScrollBar>
    <ScrollBar $horizontal>
      <ScrollButton aria-label="左へ"><Chevron dir="left" /></ScrollButton>
      <ScrollTrack $grow={443} />
      <ScrollThumb $horizontal />
      <ScrollTrack $grow={350} />
      <ScrollButton aria-label="右へ"><Chevron dir="right" /></ScrollButton>
    </ScrollBar>
    <ScrollCorner />
  </Workspace>
);

const PropertyPanel = () => (
  <Properties>
    <PropertiesHeader>
      <PropertiesTitle>文字プロパティ</PropertiesTitle>
      <ToggleButton aria-label="パネルを閉じる"><PanelToggle flip /></ToggleButton>
    </PropertiesHeader>
    <PropertiesForm onSubmit={(e) => e.preventDefault()}>
      <TextLabel htmlFor="string">文字列:</TextLabel>
      <TextFrame>
        <TextArea id="string" defaultValue="%A" />
        <TextScroll>
          <Chevron dir="up" color="#5c6266" size={16} />
          <Chevron dir="down" color="#5c6266" size={16} />
        </TextScroll>
      </TextFrame>
      <PropRow>
        <PropLabel htmlFor="font">フォント:</PropLabel>
        <PropSelect><SmallSelect id="font"><option>MS ゴシック</option></SmallSelect><Down w={11} h={9} /></PropSelect>
      </PropRow>
      <PropRow>
        <PropLabel htmlFor="size">サイズ:</PropLabel>
        <NumberInput id="size" defaultValue="2" />
      </PropRow>
      <PropRow>
        <PropLabel htmlFor="color">色:</PropLabel>
        <ColorSelect><ColorValue id="color" /><Down w={11} h={9} /></ColorSelect>
      </PropRow>
      <PropRow>
        <PropLabel htmlFor="angle">角度:</PropLabel>
        <NumberInput id="angle" defaultValue="0" />度
      </PropRow>
      {["斜体", "太字", "下線"].map((name) => <CheckRow key={name}><WhiteCheck />{name}</CheckRow>)}
      <GoldRule />
      <CheckRow><WhiteCheck />既定値として保存</CheckRow>
      <ResetButton type="button">出荷時の設定に戻す</ResetButton>
    </PropertiesForm>
  </Properties>
);

export default function App() {
  return (
    <>
      <GlobalStyle />
      <Window>
        <TitleBar>
          <AppIcon />
          <Title>無題 - 3D アーキデザイナー11 Professional</Title>
          <CaptionButton aria-label="最小化"><svg width="13" height="13"><path d="M0 6.500h13" stroke="#000" /></svg></CaptionButton>
          <CaptionButton aria-label="最大化"><svg width="13" height="13"><path d="M.5 .5h12v12H.5z" fill="none" stroke="#000" /></svg></CaptionButton>
          <CaptionButton aria-label="閉じる"><svg width="13" height="13"><path d="M.5 .5l12 12M12.500 .5l-12 12" stroke="#000" /></svg></CaptionButton>
        </TitleBar>
        <MenuBar>{menus.map((name) => <MenuItem key={name}>{name}</MenuItem>)}</MenuBar>
        <TopToolbar />
        <Body>
          <LeftSidebar />
          <Divider />
          <ToolPanel />
          <DrawingArea />
          <PropertyPanel />
        </Body>
        <Callout $left={-3} $top={154} $width={172} $height={39} />
        <Callout $left={167} $top={107} $width={274} $height={60} />
        <Callout $left={168} $top={221} $width={121} $height={49} />
      </Window>
    </>
  );
}
